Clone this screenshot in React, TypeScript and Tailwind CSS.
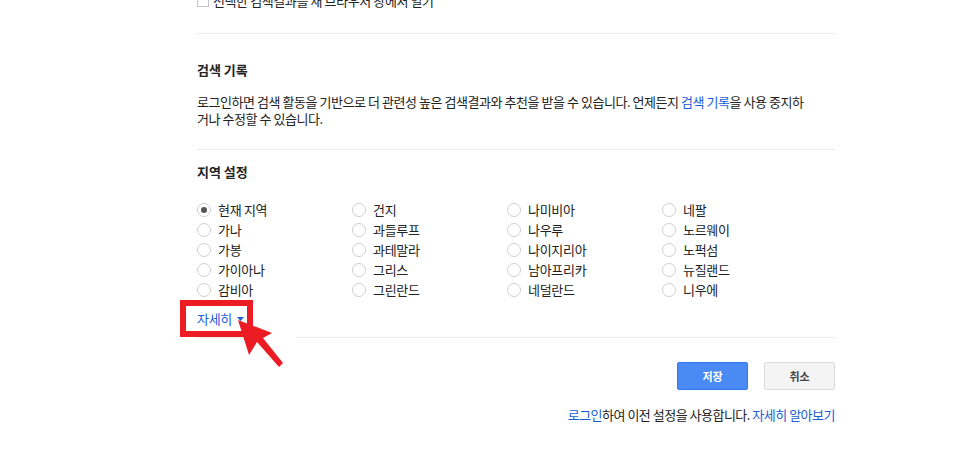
const font = { fontFamily: '"Noto Sans CJK KR", "Noto Sans", sans-serif' }

const regions = [
  ['현재 지역', '건지', '나미비아', '네팔'],
  ['가나', '과들루프', '나우루', '노르웨이'],
  ['가봉', '과테말라', '나이지리아', '노퍽섬'],
  ['가이아나', '그리스', '남아프리카', '뉴질랜드'],
  ['감비아', '그린란드', '네덜란드', '니우에'],
]

function Radio({ label, checked }: { label: string; checked?: boolean }) {
  return (
    <label className="flex h-5 items-center gap-[7px]">
      <span className="flex h-[14px] w-[14px] items-center justify-center rounded-full border border-[#cfcfcf] bg-white">
        {checked ? <span className="h-[6px] w-[6px] rounded-full bg-[#555]" /> : null}
      </span>
      <span className="text-[13px] tracking-[-0.3px] text-[#222]">{label}</span>
    </label>
  )
}

export default function App() {
  return (
    <div className="relative h-[469px] w-[979px] overflow-hidden bg-white" style={font}>
      <div className="ml-[197px] w-[638px]">
        <div className="-mt-[8px] flex h-[17px] items-center gap-[4px]">
          <span className="h-[12px] w-[12px] border border-[#c6c6c6] bg-white" />
          <span className="text-[13px] tracking-[-0.4px] text-[#222]">
            선택한 검색결과를 새 브라우저 창에서 열기
          </span>
        </div>
        <div className="mt-[24px] border-t border-[#ebebeb]" />

        <h2 className="mt-[27px] text-[13px] leading-[17px] font-bold text-[#222]">검색 기록</h2>
        <p className="mt-[15px] w-[618px] text-[13px] leading-[17px] tracking-[-0.45px] text-[#222]">
          로그인하면 검색 활동을 기반으로 더 관련성 높은 검색결과와 추천을 받을 수 있습니다. 언제든지{' '}
          <span className="text-[#1a5dd6]">검색 기록</span>을 사용 중지하거나 수정할 수 있습니다.
        </p>
        <div className="mt-[22px] border-t border-[#ebebeb]" />

        <h2 className="mt-[13px] text-[13px] leading-[17px] font-bold text-[#222]">지역 설정</h2>
        <div className="mt-[20px] grid grid-cols-[155px_155px_155px_155px]">
          {regions.map((row) =>
            row.map((name) => <Radio key={name} label={name} checked={name === '현재 지역'} />),
          )}
        </div>
        <div className="mt-[10px] flex items-center gap-[5px] text-[13px] leading-[17px] tracking-[-0.3px] text-[#1a5dd6]">
          자세히
          <svg width="7" height="4" viewBox="0 0 7 4">
            <path d="M0 0h7L3.5 4z" fill="#1a5dd6" />
          </svg>
        </div>
        <div className="mt-[10px] border-t border-[#ebebeb]" />

        <div className="mt-[24px] flex justify-end gap-[16px]">
          <button className="h-[28px] w-[71px] rounded-[2px] border border-[#3079ed] bg-[#4a8af4] text-[11px] font-bold text-white">
            저장
          </button>
          <button className="h-[28px] w-[71px] rounded-[2px] border border-[#dcdcdc] bg-[#f4f4f4] text-[11px] font-bold text-[#444]">
            취소
          </button>
        </div>
        <p className="mt-[16px] text-right text-[13px] leading-[17px] tracking-[-0.5px] text-[#222]">
          <span className="text-[#1a5dd6]">로그인</span>하여 이전 설정을 사용합니다.{' '}
          <span className="text-[#1a5dd6]">자세히 알아보기</span>
        </p>
      </div>

      {/* annotation */}
      <div className="absolute left-[180px] top-[300px] h-[37px] w-[73px] border-[6px] border-[#ec1c24]" />
      <div className="absolute left-[250px] top-[336px] h-[3px] w-[47px] bg-white" />
      <svg className="absolute left-0 top-0" width="979" height="469">
        <polygon
          points="238,320 272,333 263,338 283,363 279,367 257,342 249,355"
          fill="#ec1c24"
        />
      </svg>
    </div>
  )
}
